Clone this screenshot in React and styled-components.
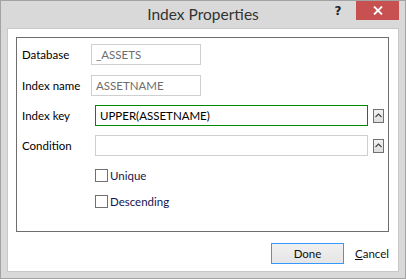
import React from "react";
import styled, { createGlobalStyle } from "styled-components";

const Global = createGlobalStyle`
  html, body {
    margin: 0;
    padding: 0;
    background: #fff;
  }
  body {
    font-family: Lato, "Liberation Sans", sans-serif;
    font-size: 11.5px;
    color: #000;
  }
`;

const Window = styled.div`
  width: 406px;
  height: 279px;
  box-sizing: border-box;
  border: 1px solid #a3a3a3;
  background: #d9d9d9;
  display: flex;
  flex-direction: column;
  padding: 0 6px 6px 6px;
`;

const TitleBar = styled.div`
  position: relative;
  height: 27px;
  display: flex;
  align-items: center;
  justify-content: center;
`;

const Title = styled.div`
  font-size: 15.5px;
  color: #333;
  padding-bottom: 1px;
`;

const TitleButtons = styled.div`
  position: absolute;
  top: 0;
  right: 0;
  display: flex;
  align-items: flex-start;
`;

const Help = styled.div`
  width: 16px;
  height: 19px;
  margin-right: 10px;
  display: flex;
  align-items: center;
  justify-content: center;
  font-family: "DejaVu Sans", sans-serif;
  font-weight: bold;
  font-size: 12px;
  color: #222;
`;

const Close = styled.div`
  width: 43px;
  height: 19px;
  background: #c75050;
  display: flex;
  align-items: center;
  justify-content: center;
`;

const Client = styled.div`
  flex: 1;
  background: #fff;
  border: 1px solid #c8c8c8;
  display: flex;
  flex-direction: column;
  padding: 8px 9px 7px 8px;
`;

const Group = styled.div`
  border: 1px solid #6e6e6e;
  height: 187px;
  padding: 6px 0 0 5px;
  display: flex;
  flex-direction: column;
`;

const Row = styled.div`
  display: flex;
  align-items: center;
  height: 21px;
  margin-bottom: ${(p) => p.gap || 9}px;
`;

const Label = styled.div`
  width: 69px;
  flex: none;
`;

const Field = styled.div`
  box-sizing: border-box;
  height: 21px;
  width: ${(p) => p.w}px;
  margin-left: ${(p) => p.offset || 0}px;
  border: 1px solid ${(p) => (p.focus ? "#008a00" : "#cfcfcf")};
  color: ${(p) => (p.dim ? "#6d6d6d" : "#000")};
  display: flex;
  align-items: center;
  padding-left: 4px;
`;

const SpinUp = styled.div`
  box-sizing: border-box;
  width: 11px;
  height: 14px;
  margin-left: 5px;
  border: 1px solid #707070;
  background: linear-gradient(#f2f2f2, #dddddd);
  display: flex;
  align-items: center;
  justify-content: center;
`;

const Check = styled.label`
  display: flex;
  align-items: center;
  height: 13px;
  margin-left: 73px;
  margin-bottom: 13px;
  color: #141450;
`;

const Box = styled.span`
  box-sizing: border-box;
  width: 13px;
  height: 13px;
  border: 1px solid #707070;
  background: #fff;
  margin-right: 2px;
`;

const Footer = styled.div`
  margin-top: auto;
  display: flex;
  justify-content: flex-end;
  align-items: center;
`;

const Button = styled.div`
  box-sizing: border-box;
  width: 73px;
  height: 21px;
  border: 1px solid #3399ff;
  background: linear-gradient(#f0f0f0, #e5e5e5);
  display: flex;
  align-items: center;
  justify-content: center;
  color: #111;
`;

const LinkButton = styled.div`
  margin-left: 11px;
  color: #111;
  span {
    text-decoration: underline;
  }
`;

const Caret = () => (
  <svg width="7" height="5" viewBox="0 0 7 5">
    <path d="M0.5 4 L3.5 1 L6.5 4" fill="none" stroke="#444" strokeWidth="1.1" />
  </svg>
);

const CloseIcon = () => (
  <svg width="10" height="9" viewBox="0 0 10 9">
    <path d="M1 0.5 L9 8.5 M9 0.5 L1 8.5" stroke="#fff" strokeWidth="1.8" />
  </svg>
);

export default function App() {
  return (
    <>
      <Global />
      <Window>
        <TitleBar>
          <Title>Index Properties</Title>
          <TitleButtons>
            <Help>?</Help>
            <Close>
              <CloseIcon />
            </Close>
          </TitleButtons>
        </TitleBar>
        <Client>
          <Group>
            <Row gap={10}>
              <Label>Database</Label>
              <Field w={110} dim>
                _ASSETS
              </Field>
            </Row>
            <Row>
              <Label>Index name</Label>
              <Field w={110} dim>
                ASSETNAME
              </Field>
            </Row>
            <Row>
              <Label>Index key</Label>
              <Field w={273} offset={4} focus>
                UPPER(ASSETNAME)
              </Field>
              <SpinUp>
                <Caret />
              </SpinUp>
            </Row>
            <Row gap={13}>
              <Label>Condition</Label>
              <Field w={273} offset={4} />
              <SpinUp>
                <Caret />
              </SpinUp>
            </Row>
            <Check>
              <Box />
              Unique
            </Check>
            <Check>
              <Box />
              Descending
            </Check>
          </Group>
          <Footer>
            <Button>Done</Button>
            <LinkButton>
              <span>C</span>ancel
            </LinkButton>
          </Footer>
        </Client>
      </Window>
    </>
  );
}
